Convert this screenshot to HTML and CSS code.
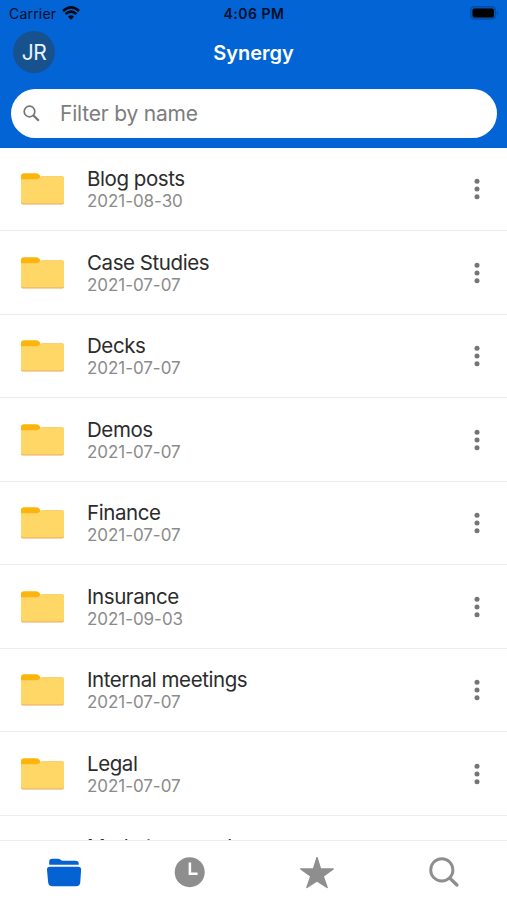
FILE: index.html
```html
<!DOCTYPE html>
<html lang="en">
<head>
<meta charset="utf-8">
<title>Synergy</title>
<link rel="stylesheet" href="styles.css">
</head>
<body>
<svg class="defs" width="0" height="0" aria-hidden="true">
  <symbol id="folder" viewBox="0 0 44 34">
    <path d="M1 4Q1 1.2 4 1.2H16Q18.5 1.2 20 3.5L21 8H1Z" fill="#fdb50b"/>
    <path d="M1 7.3H16.5Q18.5 7.3 20.3 5.2Q21.2 4.2 23 4.2H41.5Q44 4.2 44 6.5V30Q44 32.6 41.5 32.6H3.5Q1 32.6 1 30Z" fill="#eaa95c"/>
    <path d="M1 7.3H16.5Q18.5 7.3 20.3 5.2Q21.2 4.2 23 4.2H41.5Q44 4.2 44 6.5V29Q44 31.6 41.5 31.6H3.5Q1 31.6 1 29Z" fill="#ffd766"/>
  </symbol>
  <symbol id="more" viewBox="0 0 6 22">
    <g fill="#757575"><circle cx="3" cy="3.3" r="2.5"/><circle cx="3" cy="11" r="2.5"/><circle cx="3" cy="18.7" r="2.5"/></g>
  </symbol>
</svg>
<div class="app">
  <header class="header">
    <div class="status">
      <div class="carrier"><span>Carrier</span>
        <svg width="18" height="14" viewBox="0 0 18 14"><path d="M1 4.9Q9-2 17 4.9" fill="none" stroke="#000814" stroke-width="2.7"/><path d="M3.6 8Q9 3.4 14.4 8" fill="none" stroke="#000814" stroke-width="2.6"/><path d="M6 10.7Q9 8 12 10.7L9 13.8Z" fill="#000814"/></svg>
      </div>
      <span class="time">4:06 PM</span>
      <svg class="battery" width="30" height="14" viewBox="0 0 30 14"><rect x=".6" y=".6" width="25" height="12.6" rx="3.6" fill="#0057b8" stroke="#0649a0"/><rect x="2.5" y="2.5" width="21.5" height="9" rx="2" fill="#000"/><path d="M27.2 5Q29.3 7 27.2 9Z" fill="#0649a0"/></svg>
    </div>
    <div class="titlebar">
      <span class="avatar">JR</span>
      <h1>Synergy</h1>
    </div>
    <div class="search">
      <svg width="18" height="18" viewBox="0 0 18 18" fill="none" stroke="#757575"><circle cx="6.5" cy="6.5" r="5.3" stroke-width="1.7"/><path d="M10.2 10.2L15.8 15.8" stroke-width="2.3"/></svg>
      <span>Filter by name</span>
    </div>
  </header>
  <main class="list">
    <div class="row"><svg class="folder"><use href="#folder"/></svg><div class="text"><p class="name">Blog posts</p><p class="date">2021-08-30</p></div><svg class="more"><use href="#more"/></svg></div>
    <div class="row"><svg class="folder"><use href="#folder"/></svg><div class="text"><p class="name">Case Studies</p><p class="date">2021-07-07</p></div><svg class="more"><use href="#more"/></svg></div>
    <div class="row"><svg class="folder"><use href="#folder"/></svg><div class="text"><p class="name">Decks</p><p class="date">2021-07-07</p></div><svg class="more"><use href="#more"/></svg></div>
    <div class="row"><svg class="folder"><use href="#folder"/></svg><div class="text"><p class="name">Demos</p><p class="date">2021-07-07</p></div><svg class="more"><use href="#more"/></svg></div>
    <div class="row"><svg class="folder"><use href="#folder"/></svg><div class="text"><p class="name">Finance</p><p class="date">2021-07-07</p></div><svg class="more"><use href="#more"/></svg></div>
    <div class="row"><svg class="folder"><use href="#folder"/></svg><div class="text"><p class="name">Insurance</p><p class="date">2021-09-03</p></div><svg class="more"><use href="#more"/></svg></div>
    <div class="row"><svg class="folder"><use href="#folder"/></svg><div class="text"><p class="name">Internal meetings</p><p class="date">2021-07-07</p></div><svg class="more"><use href="#more"/></svg></div>
    <div class="row"><svg class="folder"><use href="#folder"/></svg><div class="text"><p class="name">Legal</p><p class="date">2021-07-07</p></div><svg class="more"><use href="#more"/></svg></div>
    <div class="row"><svg class="folder"><use href="#folder"/></svg><div class="text"><p class="name">Market research</p></div></div>
  </main>
  <nav class="tabs">
    <svg class="files" width="36" height="32" viewBox="0 0 36 32" fill="#0462d2"><path d="M3.2 7.8V4.5Q3.2 1.7 6.2 1.7H12Q13.5 1.7 14.5 2.7Q15.5 3.7 17 3.7H29.5Q32.8 3.7 32.8 7V7.8Z"/><path d="M4 9.8H32Q35.3 9.8 35.1 12.8L34.3 25Q34 29.3 30 29.3H6.5Q2.5 29.3 2.1 25L1 12.8Q.8 9.8 4 9.8Z"/></svg>
    <svg width="32" height="32" viewBox="0 0 32 32"><circle cx="15.7" cy="15.2" r="15" fill="#8e8e8e"/><path d="M15.9 5.5V16.8H23.6" fill="none" stroke="#fff" stroke-width="2.5"/></svg>
    <svg width="36" height="34" viewBox="0 0 36 34"><path d="M18 .5L21.5 12H34.2L24.2 19.3L28.1 30.5L18 23.8L7.9 30.5L11.8 19.3L1.8 12H14.5Z" fill="#8e8e8e" stroke="#8e8e8e" stroke-width="1.4" stroke-linejoin="round"/></svg>
    <svg width="32" height="32" viewBox="0 0 32 32" fill="none" stroke="#8e8e8e"><circle cx="13.8" cy="12.9" r="11.1" stroke-width="2.9"/><path d="M21.8 21.1L28.9 28" stroke-width="3.4" stroke-linecap="round"/></svg>
  </nav>
</div>
</body>
</html>
```

FILE: styles.css
```css
* { box-sizing: border-box; }
body, h1, p { margin: 0; }
body { font-family: Inter, "Liberation Sans", sans-serif; background: #fff; }
.defs { display: none; }
.app { display: flex; flex-direction: column; height: 900px; overflow: hidden; }
.header { flex: none; height: 147.5px; background: #0264d5; }
.status { display: grid; grid-template-columns: 1fr auto 1fr; align-items: center; height: 27px; padding: 0 7px 0 9px; color: #000d26; font-size: 14px; line-height: 27px; }
.carrier { display: flex; align-items: center; gap: 6px; letter-spacing: 0.2px; }
.carrier svg { margin-top: -2px; }
.time { margin-left: -1px; font-weight: 600; letter-spacing: 0.5px; }
.battery { justify-self: end; margin-top: -1px; }
.titlebar { display: grid; grid-template-columns: 42px 1fr 42px; align-items: center; height: 50px; padding: 0 13px; }
.avatar { display: flex; align-items: center; justify-content: center; width: 42px; height: 42px; border-radius: 50%; background: #17528f; color: #e9f3ff; font-size: 21px; letter-spacing: -0.5px; }
h1 { padding-top: 1px; color: #fff; font-size: 20px; font-weight: 600; text-align: center; line-height: 24px; }
.search { display: flex; align-items: center; gap: 19px; height: 49px; margin: 12px 10px 0 11px; padding-left: 12px; border-radius: 25px; background: #fff; color: #7d7d7d; font-size: 21px; letter-spacing: -0.2px; }
.list { flex: 1; min-height: 0; overflow: hidden; }
.row { display: flex; align-items: center; height: 83.5px; padding: 1px 27px 0 20px; border-bottom: 1.5px solid #ececec; }
.folder { flex: none; width: 44px; height: 34px; }
.text { flex: 1; height: 48.4px; margin-left: 23px; white-space: nowrap; }
.name { padding-top: 1px; color: #2c2c2c; font-size: 20.5px; line-height: 26px; letter-spacing: -0.43px; }
.date { margin-top: -1px; color: #8b8b8b; font-size: 17px; line-height: 20px; letter-spacing: -0.05px; }
.more { flex: none; width: 6px; height: 22px; }
.tabs { flex: none; display: grid; grid-template-columns: repeat(4, 1fr); justify-items: center; align-items: start; height: 60px; padding-top: 16px; border-top: 1px solid #ececec; background: #fff; }
.files { margin-left: 2px; }
```
